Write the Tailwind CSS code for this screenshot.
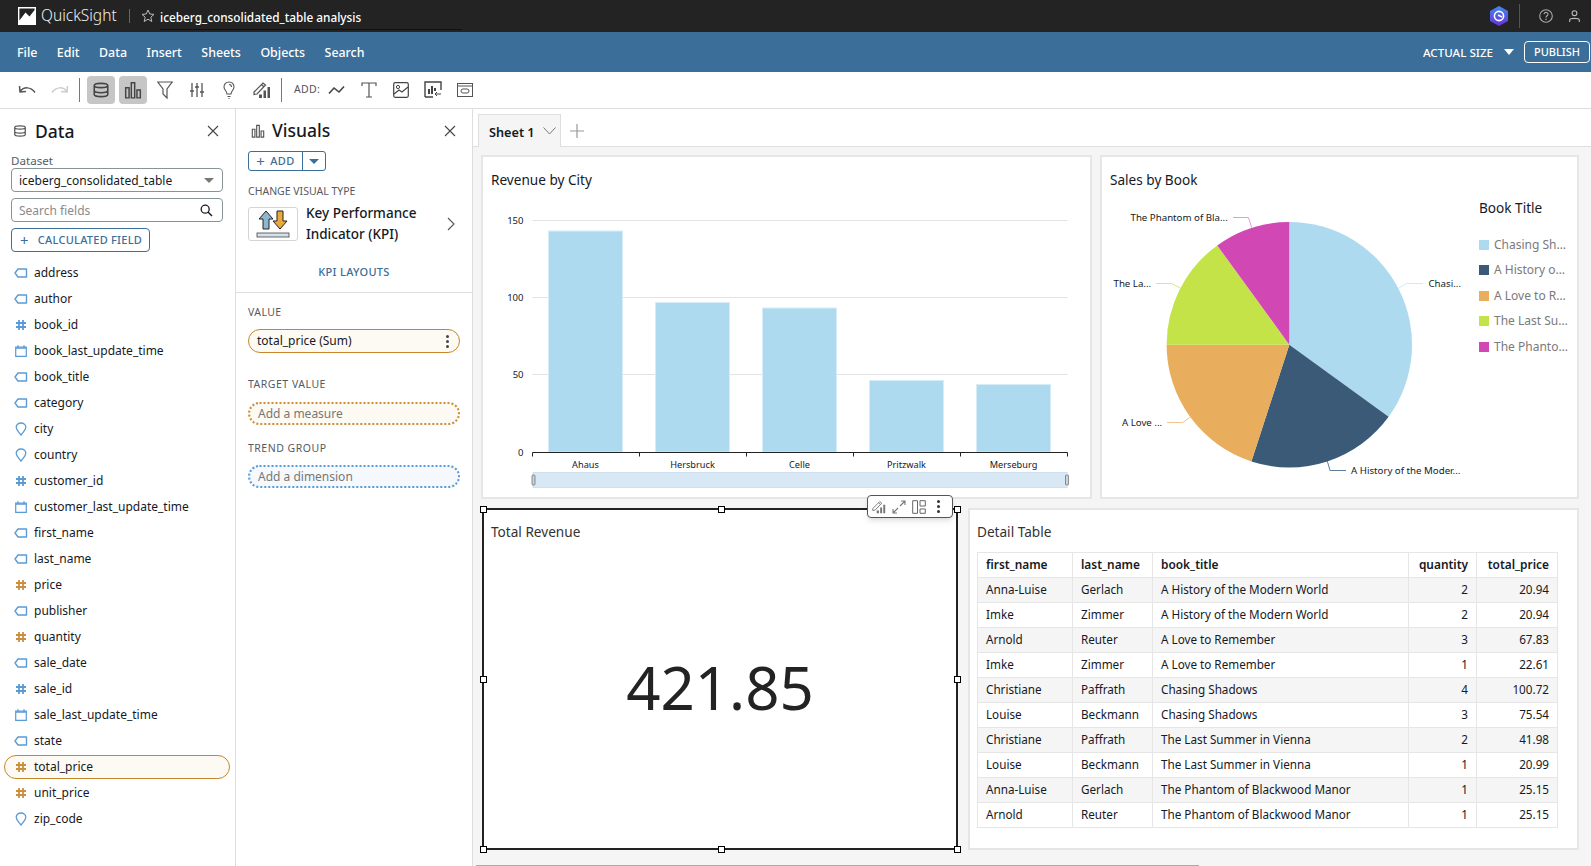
<!DOCTYPE html>
<html><head><meta charset="utf-8"><script src="https://cdn.jsdelivr.net/npm/@tailwindcss/browser@4"></script></head>
<body class="m-0 overflow-hidden">
<svg class="hidden" width="0" height="0">
<symbol id="tag" viewBox="0 0 14 10"><path d="M4 1 H12.5 V9 H4 L1 5 Z" fill="none" stroke="currentColor" stroke-width="1.4" stroke-linejoin="round"/></symbol>
<symbol id="hash" viewBox="0 0 12 12"><path d="M4 1 V11 M8 1 V11 M1 4 H11 M1 8 H11" fill="none" stroke="currentColor" stroke-width="1.8"/></symbol>
<symbol id="cal" viewBox="0 0 12 12"><path d="M.7 2.2 H11.3 V11.3 H.7 Z" fill="none" stroke="currentColor" stroke-width="1.2"/><path d="M3 .2 V3.6 M9 .2 V3.6 M1 3.2 H11" fill="none" stroke="currentColor" stroke-width="1.3"/></symbol>
<symbol id="pin" viewBox="0 0 12 14"><path d="M6 13 C3.5 9.5 1.2 7.8 1.2 5.2 C1.2 2.7 3.3 1 6 1 C8.7 1 10.8 2.7 10.8 5.2 C10.8 7.8 8.5 9.5 6 13 Z" fill="none" stroke="currentColor" stroke-width="1.3"/></symbol>
<symbol id="x" viewBox="0 0 12 12"><path d="M1 1 L11 11 M11 1 L1 11" fill="none" stroke="currentColor" stroke-width="1.1"/></symbol>
<symbol id="db" viewBox="0 0 16 16"><path d="M2 4 C2 1.5 14 1.5 14 4 V12 C14 14.5 2 14.5 2 12 Z M2 4 C2 6.5 14 6.5 14 4 M2 8.5 C2 11 14 11 14 8.5" fill="none" stroke="currentColor" stroke-width="1.4"/></symbol>
<symbol id="bars" viewBox="0 0 16 16"><path d="M1.5 6 H4.5 V15 H1.5 Z M6.5 1.5 H9.5 V15 H6.5 Z M11.5 8 H14.5 V15 H11.5 Z" fill="none" stroke="currentColor" stroke-width="1.3"/></symbol>
<symbol id="pen" viewBox="0 0 18 18"><path d="M1 11 L10 2 L12.5 4 L4 13 L1 13.5 Z M8.5 3.5 L11 6" fill="none" stroke="currentColor" stroke-width="1.2"/><path d="M6 13.5 H9 V17 H6 Z M10.5 9.5 H13 V17 H10.5 Z M14.5 6 H17 V17 H14.5 Z" fill="currentColor"/></symbol>
</svg>
<div class="w-[1591px] h-[866px] overflow-hidden flex flex-col bg-white text-[#16191f] font-['Noto_Sans',sans-serif] text-[12px]">
  <!-- top bar -->
  <header class="h-8 bg-[#232323] flex items-center text-white shrink-0">
    <svg class="ml-[18px] w-[18px] h-[18px]" viewBox="0 0 18 18"><rect width="18" height="18" fill="#fff"/><path d="M1.4 1.4 H16.6 V3 L11.5 9.5 L7.5 5.5 L1.4 13.5 Z" fill="#232323"/></svg>
    <span class="ml-[5px] w-[75px] text-[15.5px] font-light leading-none text-[#f0f0f0]">QuickSight</span>
    <span class="ml-[13px] w-px h-[14px] bg-[#666]"></span>
    <svg class="ml-[11px] w-[14px] h-[14px]" viewBox="0 0 14 14"><path d="M7 1 L8.8 5 L13 5.4 L9.8 8.2 L10.8 12.5 L7 10.2 L3.2 12.5 L4.2 8.2 L1 5.4 L5.2 5 Z" fill="none" stroke="#bbb" stroke-width="1"/></svg>
    <span class="ml-[5px] text-[11.8px] font-medium w-[302px] h-[26px] leading-[26px] mt-[1px] border-b border-[#111]">iceberg_consolidated_table analysis</span>
    <svg class="ml-auto w-[18px] h-5" viewBox="0 0 18 20"><defs><linearGradient id="g" x1="0" y1="0" x2="0" y2="1"><stop offset="0" stop-color="#3f8ae8"/><stop offset="1" stop-color="#6a2ee0"/></linearGradient></defs><path d="M9 0 L18 5 V15 L9 20 L0 15 V5 Z" fill="url(#g)"/><circle cx="9" cy="10" r="4.6" fill="none" stroke="#fff" stroke-width="1.6"/><path d="M8 9 L12 11" stroke="#fff" stroke-width="1.4"/></svg>
    <span class="ml-[11px] w-px h-6 bg-[#555]"></span>
    <svg class="ml-[19px] w-[14px] h-[14px]" viewBox="0 0 14 14"><circle cx="7" cy="7" r="6.3" fill="none" stroke="#aaa" stroke-width="1.1"/><path d="M5 5.3 C5 2.8 9 2.8 9 5.2 C9 6.8 7 6.8 7 8.5" fill="none" stroke="#aaa" stroke-width="1.1"/><circle cx="7" cy="10.3" r=".8" fill="#aaa"/></svg>
    <svg class="ml-[16px] mr-[11px] w-[11px] h-[13px]" viewBox="0 0 11 13"><circle cx="5.5" cy="3.2" r="2.4" fill="none" stroke="#bbb" stroke-width="1.1"/><path d="M.7 12 V10 C.7 7.8 10.3 7.8 10.3 10 V12" fill="none" stroke="#bbb" stroke-width="1.1"/></svg>
  </header>
  <!-- menu -->
  <nav class="h-10 bg-[#3b6e98] flex items-center text-white font-medium shrink-0 pl-[17px] gap-[19.5px] text-[12.4px]">
    <span class="pt-[2px]">File</span><span class="pt-[2px]">Edit</span><span class="pt-[2px]">Data</span><span class="pt-[2px]">Insert</span><span class="pt-[2px]">Sheets</span><span class="pt-[2px]">Objects</span><span class="pt-[2px]">Search</span>
    <span class="ml-auto text-[11.6px] pt-[1px]">ACTUAL SIZE</span>
    <span class="-ml-[9px] w-0 h-0 border-x-[5px] border-x-transparent border-t-[6px] border-t-white"></span>
    <span class="-ml-[9px] mr-px w-[66px] h-[22px] border-[1.5px] border-white rounded-[4px] flex items-center justify-center text-[11px]">PUBLISH</span>
  </nav>
  <!-- toolbar -->
  <div class="h-[37px] border-b border-[#dedede] flex items-center shrink-0 text-[#545b64]">
    <svg class="ml-[18px] w-[18px] h-[14px]" viewBox="0 0 18 14"><path d="M1.5 3 L2 9 L8 8.5 M2 8.5 C6 3.5 12.5 3.5 17 9.5" fill="none" stroke="#555" stroke-width="1.5"/></svg>
    <svg class="ml-[15px] w-[18px] h-[14px]" viewBox="0 0 18 14"><path d="M16.5 3 L16 9 L10 8.5 M16 8.5 C12 3.5 5.5 3.5 1 9.5" fill="none" stroke="#ccc" stroke-width="1.5"/></svg>
    <span class="ml-[10px] w-px h-6 bg-[#777]"></span>
    <span class="ml-[7px] w-7 h-7 rounded bg-[#c6c6c6] flex items-center justify-center"><svg class="w-[18px] h-[18px] text-[#444]"><use href="#db"/></svg></span>
    <span class="ml-1 w-7 h-7 rounded bg-[#c6c6c6] flex items-center justify-center"><svg class="w-[18px] h-[18px] text-[#444]"><use href="#bars"/></svg></span>
    <svg class="ml-[10px] w-4 h-[18px]" viewBox="0 0 16 18"><path d="M.8 1 H15.2 L10 8 V17 L6 13 V8 Z" fill="none" stroke="#555" stroke-width="1.2"/></svg>
    <svg class="ml-4 w-4 h-4" viewBox="0 0 16 16"><path d="M3 1 V15 M8 1 V15 M13 1 V15 M1 9 H5 M6 5 H10 M11 10 H15" fill="none" stroke="#555" stroke-width="1.3"/></svg>
    <svg class="ml-[18px] w-3 h-[18px]" viewBox="0 0 12 18"><path d="M4 13 C4 10 1 9 1 6 C1 3 3 1 6 1 C9 1 11 3 11 6 C11 9 8 10 8 13 Z M4.5 15.5 H7.5 M5.5 17.5 H6.5 M6 3.5 C7.5 3.5 8.5 4.5 8.5 6" fill="none" stroke="#555" stroke-width="1.1"/></svg>
    <svg class="ml-[18px] w-[18px] h-[18px] text-[#555]"><use href="#pen"/></svg>
    <span class="ml-[10px] w-px h-6 bg-[#777]"></span>
    <span class="ml-[12px] text-[10.5px] text-[#555] tracking-[0.3px]">ADD:</span>
    <svg class="ml-[8px] w-[17px] h-[10px]" viewBox="0 0 17 10"><path d="M1 8.5 L6 3 L11 7 L16 1.5" fill="none" stroke="#444" stroke-width="1.6"/></svg>
    <svg class="ml-[16px] w-4 h-4" viewBox="0 0 16 16"><path d="M1 4 V1 H15 V4 M8 1 V15 M5 15 H11" fill="none" stroke="#555" stroke-width="1.2"/></svg>
    <svg class="ml-4 w-4 h-4" viewBox="0 0 16 16"><rect x=".7" y=".7" width="14.6" height="14.6" rx="1.5" fill="none" stroke="#444" stroke-width="1.2"/><circle cx="5" cy="5" r="1.6" fill="none" stroke="#444"/><path d="M1 12 L6 8 L9 10 L15 5" fill="none" stroke="#444" stroke-width="1.2"/></svg>
    <svg class="ml-[15px] w-[18px] h-[18px]" viewBox="0 0 18 18"><path d="M1 16 V1 H17 V9 M1 16 H9" fill="none" stroke="#444" stroke-width="1.4"/><path d="M4 13 V8 H6 V13 Z M7 13 V5 H9 V13 Z M10 10 V7 H12 V10 Z" fill="#444"/><path d="M17 13 H11 M13 11 L11 13 L13 15" fill="none" stroke="#444"/></svg>
    <svg class="ml-[15px] w-4 h-[14px]" viewBox="0 0 16 14"><rect x=".5" y=".5" width="15" height="13" fill="none" stroke="#555"/><path d="M.5 3 H15.5" stroke="#555"/><rect x="4" y="6" width="8" height="4" rx="2" fill="none" stroke="#555"/></svg>
  </div>
  <main class="flex-1 flex min-h-0">
    <!-- data panel -->
    <aside class="w-[236px] shrink-0 border-r border-[#dedede]">
      <div class="h-11 flex items-center pl-[13px] pr-4">
        <svg class="w-3.5 h-3.5 text-[#555]"><use href="#db"/></svg>
        <span class="ml-[8px] text-[17.5px] font-medium">Data</span>
        <svg class="ml-auto w-3 h-3 text-[#444]"><use href="#x"/></svg>
      </div>
      <div class="pl-[11px] text-[11.6px] leading-[15px] text-[#545b64]">Dataset</div>
      <div class="mx-[11px] w-[212px] h-6 border border-[#879596] rounded-[4px] flex items-center pl-[7px] pr-2 pt-px">iceberg_consolidated_table<span class="ml-auto w-0 h-0 border-x-[5px] border-x-transparent border-t-[5px] border-t-[#777]"></span></div>
      <div class="mx-[11px] mt-1.5 w-[212px] h-6 border border-[#879596] rounded-[4px] flex items-center pl-[7px] pr-[9px] pt-px text-[#8a8a8a]">Search fields<svg class="ml-auto w-[13px] h-[13px]" viewBox="0 0 13 13"><circle cx="5.2" cy="5.2" r="4" fill="none" stroke="#16191f" stroke-width="1.3"/><path d="M8 8 L12 12" stroke="#16191f" stroke-width="1.5"/></svg></div>
      <div class="ml-[11px] mt-1.5 w-[139px] h-6 border border-[#3b6e98] rounded-[4px] flex items-center pl-2 text-[#3b6e98] text-[11px] font-medium tracking-[0.25px]"><span class="text-[15px] leading-none font-normal mr-[9px]">+</span>CALCULATED FIELD</div>
      <ul class="mt-2">
        <li class="h-[26px] flex items-center"><svg class="ml-[14px] w-[14px] h-[10px] text-[#5a9bd5]"><use href="#tag"/></svg><span class="ml-[6px]">address</span></li>
        <li class="h-[26px] flex items-center"><svg class="ml-[14px] w-[14px] h-[10px] text-[#5a9bd5]"><use href="#tag"/></svg><span class="ml-[6px]">author</span></li>
        <li class="h-[26px] flex items-center"><svg class="ml-[15px] w-[12px] h-[12px] text-[#5a9bd5]"><use href="#hash"/></svg><span class="ml-[7px]">book_id</span></li>
        <li class="h-[26px] flex items-center"><svg class="ml-[15px] w-[12px] h-[12px] text-[#5a9bd5]"><use href="#cal"/></svg><span class="ml-[7px]">book_last_update_time</span></li>
        <li class="h-[26px] flex items-center"><svg class="ml-[14px] w-[14px] h-[10px] text-[#5a9bd5]"><use href="#tag"/></svg><span class="ml-[6px]">book_title</span></li>
        <li class="h-[26px] flex items-center"><svg class="ml-[14px] w-[14px] h-[10px] text-[#5a9bd5]"><use href="#tag"/></svg><span class="ml-[6px]">category</span></li>
        <li class="h-[26px] flex items-center"><svg class="ml-[15px] w-[12px] h-[14px] text-[#5a9bd5]"><use href="#pin"/></svg><span class="ml-[7px]">city</span></li>
        <li class="h-[26px] flex items-center"><svg class="ml-[15px] w-[12px] h-[14px] text-[#5a9bd5]"><use href="#pin"/></svg><span class="ml-[7px]">country</span></li>
        <li class="h-[26px] flex items-center"><svg class="ml-[15px] w-[12px] h-[12px] text-[#5a9bd5]"><use href="#hash"/></svg><span class="ml-[7px]">customer_id</span></li>
        <li class="h-[26px] flex items-center"><svg class="ml-[15px] w-[12px] h-[12px] text-[#5a9bd5]"><use href="#cal"/></svg><span class="ml-[7px]">customer_last_update_time</span></li>
        <li class="h-[26px] flex items-center"><svg class="ml-[14px] w-[14px] h-[10px] text-[#5a9bd5]"><use href="#tag"/></svg><span class="ml-[6px]">first_name</span></li>
        <li class="h-[26px] flex items-center"><svg class="ml-[14px] w-[14px] h-[10px] text-[#5a9bd5]"><use href="#tag"/></svg><span class="ml-[6px]">last_name</span></li>
        <li class="h-[26px] flex items-center"><svg class="ml-[15px] w-[12px] h-[12px] text-[#c98f3c]"><use href="#hash"/></svg><span class="ml-[7px]">price</span></li>
        <li class="h-[26px] flex items-center"><svg class="ml-[14px] w-[14px] h-[10px] text-[#5a9bd5]"><use href="#tag"/></svg><span class="ml-[6px]">publisher</span></li>
        <li class="h-[26px] flex items-center"><svg class="ml-[15px] w-[12px] h-[12px] text-[#c98f3c]"><use href="#hash"/></svg><span class="ml-[7px]">quantity</span></li>
        <li class="h-[26px] flex items-center"><svg class="ml-[14px] w-[14px] h-[10px] text-[#5a9bd5]"><use href="#tag"/></svg><span class="ml-[6px]">sale_date</span></li>
        <li class="h-[26px] flex items-center"><svg class="ml-[15px] w-[12px] h-[12px] text-[#5a9bd5]"><use href="#hash"/></svg><span class="ml-[7px]">sale_id</span></li>
        <li class="h-[26px] flex items-center"><svg class="ml-[15px] w-[12px] h-[12px] text-[#5a9bd5]"><use href="#cal"/></svg><span class="ml-[7px]">sale_last_update_time</span></li>
        <li class="h-[26px] flex items-center"><svg class="ml-[14px] w-[14px] h-[10px] text-[#5a9bd5]"><use href="#tag"/></svg><span class="ml-[6px]">state</span></li>
        <li class="h-[26px] flex items-center"><div class="ml-1 w-[226px] h-6 border border-[#c8862a] bg-[#fdfaf3] rounded-full flex items-center"><svg class="ml-[10px] w-[12px] h-[12px] text-[#c98f3c]"><use href="#hash"/></svg><span class="ml-[7px]">total_price</span></div></li>
        <li class="h-[26px] flex items-center"><svg class="ml-[15px] w-[12px] h-[12px] text-[#c98f3c]"><use href="#hash"/></svg><span class="ml-[7px]">unit_price</span></li>
        <li class="h-[26px] flex items-center"><svg class="ml-[15px] w-[12px] h-[14px] text-[#5a9bd5]"><use href="#pin"/></svg><span class="ml-[7px]">zip_code</span></li>
      </ul>
    </aside>
    <!-- visuals panel -->
    <aside class="w-[237px] shrink-0 border-r border-[#dedede] flex flex-col">
      <div class="h-[42px] flex items-center pl-[15px] pr-[16px] pt-px shrink-0">
        <svg class="w-[14px] h-[14px] text-[#555]"><use href="#bars"/></svg>
        <span class="ml-[7px] text-[17.5px] font-medium">Visuals</span>
        <svg class="ml-auto w-3 h-3 text-[#444]"><use href="#x"/></svg>
      </div>
      <div class="ml-3 w-[78px] h-5 border border-[#3b6e98] rounded-[3px] flex items-center text-[#3b6e98] text-[11px] font-medium tracking-[0.4px]"><span class="w-[54px] h-full border-r border-[#3b6e98] flex items-center justify-center gap-[5px]"><span class="text-[15px] leading-none font-normal">+</span>ADD</span><span class="flex-1 flex justify-center"><span class="w-0 h-0 border-x-[5px] border-x-transparent border-t-[5px] border-t-[#3b6e98]"></span></span></div>
      <div class="ml-3 mt-[13px] h-[14px] leading-[14px] text-[10.5px] text-[#545b64]">CHANGE VISUAL TYPE</div>
      <div class="ml-3 mt-[9px] h-[34px] flex items-center">
        <div class="w-[50px] h-[34px] border border-[#d5d5d5] rounded-[3px] flex items-center justify-center">
          <svg class="w-[36px] h-[30px]" viewBox="0 0 36 30"><path d="M11 2 L18 10 H14 V20 H8 V10 H4 Z" fill="#8fb6cf" stroke="#222" stroke-width="1"/><path d="M25 20 L32 12 H28 V2 H22 V12 H18 Z" fill="#eba93c" stroke="#222" stroke-width="1"/><rect x="2" y="24" width="32" height="4" fill="#d5e1ea" stroke="#444" stroke-width=".8"/></svg>
        </div>
        <div class="ml-2 text-[13.5px] font-medium leading-[21px]">Key Performance<br>Indicator (KPI)</div>
        <svg class="ml-auto mr-[17px] w-2 h-[14px]" viewBox="0 0 8 14"><path d="M1 1 L7 7 L1 13" fill="none" stroke="#555" stroke-width="1.1"/></svg>
      </div>
      <div class="mt-6 h-[14px] leading-[14px] text-center text-[11px] text-[#3b6e98] font-medium tracking-[0.3px]">KPI LAYOUTS</div>
      <div class="mt-[13px] h-px bg-[#dedede]"></div>
      <div class="ml-3 mt-3 h-[14px] leading-[14px] text-[10.5px] text-[#545b64] tracking-[0.4px]">VALUE</div>
      <div class="ml-3 mt-2.5 w-[212px] h-6 border border-[#c8862a] bg-[#fdfaf3] rounded-full flex items-center pl-2">total_price (Sum)<span class="ml-auto mr-[10px] flex flex-col gap-[2px]"><i class="block w-[3px] h-[3px] rounded-full bg-[#444]"></i><i class="block w-[3px] h-[3px] rounded-full bg-[#444]"></i><i class="block w-[3px] h-[3px] rounded-full bg-[#444]"></i></span></div>
      <div class="ml-3 mt-6 h-[14px] leading-[14px] text-[10.5px] text-[#545b64] tracking-[0.5px]">TARGET VALUE</div>
      <div class="ml-3 mt-[11px] w-[212px] h-[23px] border-2 border-dotted border-[#c98f3c] bg-[#fdfaf3] rounded-full flex items-center pl-2 text-[#777]">Add a measure</div>
      <div class="ml-3 mt-4 h-[14px] leading-[14px] text-[10.5px] text-[#545b64] tracking-[0.5px]">TREND GROUP</div>
      <div class="ml-3 mt-[10px] w-[212px] h-[23px] border-2 border-dotted border-[#5a9bd5] bg-[#f5f9fd] rounded-full flex items-center pl-2 text-[#777]">Add a dimension</div>
    </aside>
    <!-- canvas -->
    <section class="flex-1 min-w-0 flex flex-col bg-[#f5f5f5]">
      <div class="h-[38px] bg-white border-b border-[#dedede] shrink-0 pt-[5px] flex">
        <div class="ml-[5px] w-[83px] h-[33px] bg-[#f5f5f5] border border-b-0 border-[#dedede] flex items-center pl-[10px] pt-[3px] font-semibold text-[12.7px]">Sheet 1<svg class="ml-[8px] -mt-1 w-[13px] h-2" viewBox="0 0 13 8"><path d="M.5 .5 L6.5 7 L12.5 .5" fill="none" stroke="#777"/></svg></div>
        <svg class="ml-[9px] mt-[10px] w-[14px] h-[14px]" viewBox="0 0 14 14"><path d="M7 0 V14 M0 7 H14" stroke="#999" stroke-width="1.2"/></svg>
      </div>
      <div class="pl-2 pt-2 flex gap-2 h-[352px] shrink-0">
        <!-- revenue -->
        <div class="w-[611px] h-[344px] bg-white border-2 border-[#e6e6e6]">
          <div class="ml-2 mt-[14px] h-[18px] leading-[18px] text-[13.6px]">Revenue by City</div>
          <svg class="block" width="607" height="308" viewBox="483 189 607 308" fill="#16191f">
            <path d="M532.5 220.5 H1067.5 M532.5 297.5 H1067.5 M532.5 374.5 H1067.5" stroke="#e3e3e3" fill="none"/>
            <g font-size="9.5"><text x="523.5" y="224" text-anchor="end">150</text><text x="523.5" y="301" text-anchor="end">100</text><text x="523.5" y="378" text-anchor="end">50</text><text x="523.5" y="456" text-anchor="end">0</text></g>
            <g fill="#aedaf0" stroke="#d6edf8"><rect x="548.5" y="231" width="74" height="221"/><rect x="655.5" y="302.5" width="74" height="149.5"/><rect x="762.5" y="308" width="74" height="144"/><rect x="869.5" y="380.5" width="74" height="71.5"/><rect x="976.5" y="384.5" width="74" height="67.5"/></g>
            <path d="M532.5 456.5 V452.5 H1067.5 V456.5 M639.5 452.5 V456.5 M746.5 452.5 V456.5 M853.5 452.5 V456.5 M960.5 452.5 V456.5" stroke="#222" fill="none"/>
            <g text-anchor="middle" font-size="9.2"><text x="585.5" y="468">Ahaus</text><text x="692.5" y="468">Hersbruck</text><text x="799.5" y="468">Celle</text><text x="906.5" y="468">Pritzwalk</text><text x="1013.5" y="468">Merseburg</text></g>
            <rect x="533" y="472.5" width="534" height="15" fill="#d9e8f5" stroke="#cfe0ee"/>
            <rect x="532" y="475" width="3" height="10" rx="1" fill="#c7d5dd" stroke="#666" stroke-width=".7"/><rect x="1065.5" y="475" width="3" height="10" rx="1" fill="#c7d5dd" stroke="#666" stroke-width=".7"/>
          </svg>
        </div>
        <!-- pie -->
        <div class="w-[479px] h-[344px] bg-white border-2 border-[#e6e6e6]">
          <div class="ml-2 mt-[14px] h-[18px] leading-[18px] text-[13.6px]">Sales by Book</div>
          <div class="flex">
            <svg class="block shrink-0" width="377" height="308" viewBox="1102 189 377 308" fill="#16191f">
              <path d="M1289.3 344.7 V222 A122.7 122.7 0 0 1 1388.6 416.8 Z" fill="#aedaf0"/>
              <path d="M1289.3 344.7 L1388.6 416.8 A122.7 122.7 0 0 1 1251.4 461.4 Z" fill="#3a5a78"/>
              <path d="M1289.3 344.7 L1251.4 461.4 A122.7 122.7 0 0 1 1166.6 344.7 Z" fill="#e9ad5e"/>
              <path d="M1289.3 344.7 H1166.6 A122.7 122.7 0 0 1 1217.2 245.4 Z" fill="#c3e348"/>
              <path d="M1289.3 344.7 L1217.2 245.4 A122.7 122.7 0 0 1 1289.3 222 Z" fill="#d148b5"/>
              <g fill="none" stroke-width="1"><path d="M1233 217.5 H1248.5 L1251.7 227.5" stroke="#e79ad8"/><path d="M1423 283.5 H1406.7 L1398.3 288.3" stroke="#cfe9f6"/><path d="M1156 283.5 H1171.7 L1180.7 288.3" stroke="#d4ec7c"/><path d="M1167 422.5 H1182.7 L1190.7 416.7" stroke="#f2c68e"/><path d="M1346 470.5 H1330 L1327.3 461" stroke="#5f7d99"/></g>
              <g font-size="9.7"><text x="1130.5" y="221">The Phantom of Bla...</text><text x="1428.5" y="287">Chasi...</text><text x="1113.5" y="287">The La...</text><text x="1122" y="426">A Love ...</text><text x="1351" y="474">A History of the Moder...</text></g>
            </svg>
            <div class="flex-1 pt-[10px] text-[#7a7a7a] text-[12px]">
              <div class="h-[18px] leading-[18px] text-[13.6px] text-[#16191f] mb-[15px]">Book Title</div>
              <div class="h-[25.5px] flex items-center"><i class="w-[10px] h-[10px] bg-[#aedaf0]"></i><span class="ml-[5px]">Chasing Sh…</span></div>
              <div class="h-[25.5px] flex items-center"><i class="w-[10px] h-[10px] bg-[#3a5a78]"></i><span class="ml-[5px]">A History o…</span></div>
              <div class="h-[25.5px] flex items-center"><i class="w-[10px] h-[10px] bg-[#e9ad5e]"></i><span class="ml-[5px]">A Love to R…</span></div>
              <div class="h-[25.5px] flex items-center"><i class="w-[10px] h-[10px] bg-[#c3e348]"></i><span class="ml-[5px]">The Last Su…</span></div>
              <div class="h-[25.5px] flex items-center"><i class="w-[10px] h-[10px] bg-[#d148b5]"></i><span class="ml-[5px]">The Phanto…</span></div>
            </div>
          </div>
        </div>
      </div>
      <div class="pl-[9px] flex gap-[10px] h-[342px] shrink-0 mt-[9px]">
        <!-- KPI -->
        <div class="relative w-[476px] h-[342px] bg-white border-2 border-[#222] flex flex-col">
          <div class="ml-[7px] mt-[13px] h-[18px] leading-[18px] text-[13.6px] text-[#333]">Total Revenue</div>
          <div class="flex-1 flex items-center justify-center pb-[15px] text-[60px] leading-none text-[#232323]">421.85</div>
          <i class="absolute -left-[4.5px] -top-[4.5px] w-[7px] h-[7px] bg-white border border-black"></i>
          <i class="absolute left-[233.5px] -top-[4.5px] w-[7px] h-[7px] bg-white border border-black"></i>
          <i class="absolute -right-[4.5px] -top-[4.5px] w-[7px] h-[7px] bg-white border border-black"></i>
          <i class="absolute -left-[4.5px] top-[166px] w-[7px] h-[7px] bg-white border border-black"></i>
          <i class="absolute -right-[4.5px] top-[166px] w-[7px] h-[7px] bg-white border border-black"></i>
          <i class="absolute -left-[4.5px] -bottom-[4.5px] w-[7px] h-[7px] bg-white border border-black"></i>
          <i class="absolute left-[233.5px] -bottom-[4.5px] w-[7px] h-[7px] bg-white border border-black"></i>
          <i class="absolute -right-[4.5px] -bottom-[4.5px] w-[7px] h-[7px] bg-white border border-black"></i>
          <div class="absolute left-[383px] -top-[15px] w-[86px] h-[23px] bg-white border border-[#555] rounded-[4px] shadow-md flex items-center pl-[4px]">
            <svg class="w-[14px] h-[14px] text-[#777]"><use href="#pen"/></svg>
            <svg class="ml-[6px] w-[14px] h-[14px]" viewBox="0 0 14 14"><path d="M8 6 L13 1 M9 1 H13 V5 M6 8 L1 13 M1 9 V13 H5" fill="none" stroke="#777" stroke-width="1.1"/></svg>
            <svg class="ml-[6px] w-[14px] h-[14px]" viewBox="0 0 14 14"><path d="M.7 .7 H5.5 V13.3 H.7 Z M8 .7 H13.3 V6 H8 Z M8 9 H13.3 V13.3 H8 Z" fill="none" stroke="#666"/></svg>
            <span class="ml-[11px] flex flex-col gap-[2px]"><i class="block w-[3px] h-[3px] rounded-full bg-[#333]"></i><i class="block w-[3px] h-[3px] rounded-full bg-[#333]"></i><i class="block w-[3px] h-[3px] rounded-full bg-[#333]"></i></span>
          </div>
        </div>
        <!-- table -->
        <div class="w-[611px] h-[342px] bg-white border-2 border-[#e6e6e6]">
          <div class="ml-[7px] mt-[13px] h-[18px] leading-[18px] text-[13.6px] text-[#333]">Detail Table</div>
          <table class="ml-[7px] mt-[11px] w-[580px] table-fixed border-collapse text-[11.7px] [&_td]:h-[25px] [&_td]:border [&_td]:border-[#e6e6e6] [&_td]:px-[8px] [&_td]:py-0 [&_th]:h-[25px] [&_th]:border [&_th]:border-[#e6e6e6] [&_th]:px-[8px] [&_th]:py-0 [&_th]:font-semibold [&_th]:text-[11.9px] [&_tbody_tr:nth-child(odd)]:bg-[#f5f5f5]">
            <colgroup><col class="w-[95px]"><col class="w-[80px]"><col class="w-[256px]"><col class="w-[68px]"><col class="w-[81px]"></colgroup>
            <thead><tr><th class="text-left">first_name</th><th class="text-left">last_name</th><th class="text-left">book_title</th><th class="text-right">quantity</th><th class="text-right">total_price</th></tr></thead>
            <tbody>
              <tr><td>Anna-Luise</td><td>Gerlach</td><td>A History of the Modern World</td><td class="text-right">2</td><td class="text-right">20.94</td></tr>
              <tr><td>Imke</td><td>Zimmer</td><td>A History of the Modern World</td><td class="text-right">2</td><td class="text-right">20.94</td></tr>
              <tr><td>Arnold</td><td>Reuter</td><td>A Love to Remember</td><td class="text-right">3</td><td class="text-right">67.83</td></tr>
              <tr><td>Imke</td><td>Zimmer</td><td>A Love to Remember</td><td class="text-right">1</td><td class="text-right">22.61</td></tr>
              <tr><td>Christiane</td><td>Paffrath</td><td>Chasing Shadows</td><td class="text-right">4</td><td class="text-right">100.72</td></tr>
              <tr><td>Louise</td><td>Beckmann</td><td>Chasing Shadows</td><td class="text-right">3</td><td class="text-right">75.54</td></tr>
              <tr><td>Christiane</td><td>Paffrath</td><td>The Last Summer in Vienna</td><td class="text-right">2</td><td class="text-right">41.98</td></tr>
              <tr><td>Louise</td><td>Beckmann</td><td>The Last Summer in Vienna</td><td class="text-right">1</td><td class="text-right">20.99</td></tr>
              <tr><td>Anna-Luise</td><td>Gerlach</td><td>The Phantom of Blackwood Manor</td><td class="text-right">1</td><td class="text-right">25.15</td></tr>
              <tr><td>Arnold</td><td>Reuter</td><td>The Phantom of Blackwood Manor</td><td class="text-right">1</td><td class="text-right">25.15</td></tr>
            </tbody>
          </table>
        </div>
      </div>
      <div class="mt-[15px] ml-[3px] w-[723px] h-[1px] bg-[#aaa] shrink-0"></div>
    </section>
  </main>
</div>
</body></html>
